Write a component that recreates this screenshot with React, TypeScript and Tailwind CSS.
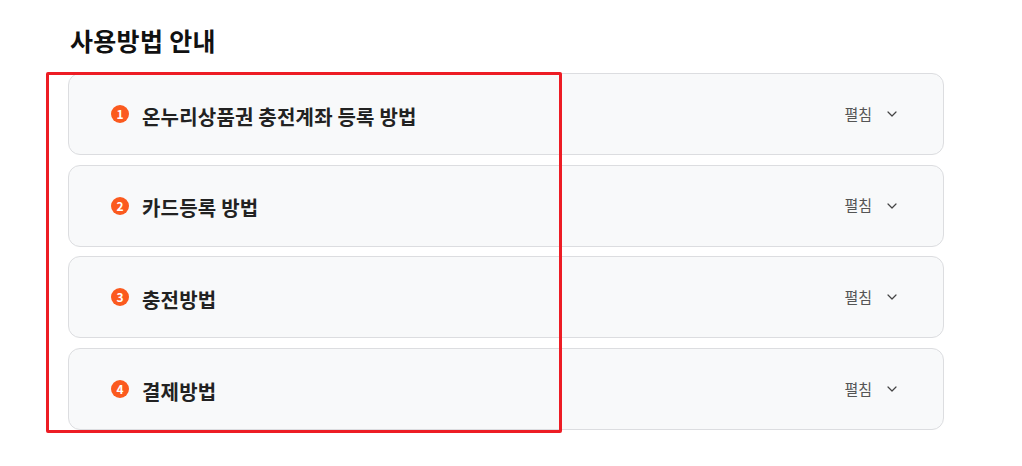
import { ChevronDown } from "lucide-react"

const items = [
  { n: 1, title: "온누리상품권 충전계좌 등록 방법" },
  { n: 2, title: "카드등록 방법" },
  { n: 3, title: "충전방법" },
  { n: 4, title: "결제방법" },
]

export default function App() {
  return (
    <div
      className="relative h-[466px] w-[1022px] bg-white pl-[68px] pt-[24px]"
      style={{ fontFamily: '"Noto Sans CJK KR", "Noto Sans", sans-serif' }}
    >
      <h2 className="pl-[2px] text-[25px] font-bold leading-[32px] tracking-[0.3px] text-[#111]">
        사용방법 안내
      </h2>
      <div className="mt-[17px] flex w-[876px] flex-col gap-[9.7px]">
        {items.map((it) => (
          <div
            key={it.n}
            className="flex h-[82px] items-center rounded-[12px] border border-[#dcdde0] bg-[#f8f9fa] pl-[42px] pr-[43px]"
          >
            <span className="flex h-[18px] w-[18px] items-center justify-center rounded-full bg-[#fb5a1e] text-[12px] font-bold text-white">
              {it.n}
            </span>
            <span className="ml-[13px] mt-[5px] text-[20px] font-bold tracking-[0.2px] text-[#222]">
              {it.title}
            </span>
            <span className="ml-auto text-[15px] text-[#555]">펼침</span>
            <ChevronDown className="ml-[12px] h-[16px] w-[16px] text-[#444]" strokeWidth={1.8} />
          </div>
        ))}
      </div>
      <div className="pointer-events-none absolute left-[46px] top-[72px] h-[361px] w-[516px] rounded-[2px] border-[3px] border-[#ed1c24]" />
    </div>
  )
}
